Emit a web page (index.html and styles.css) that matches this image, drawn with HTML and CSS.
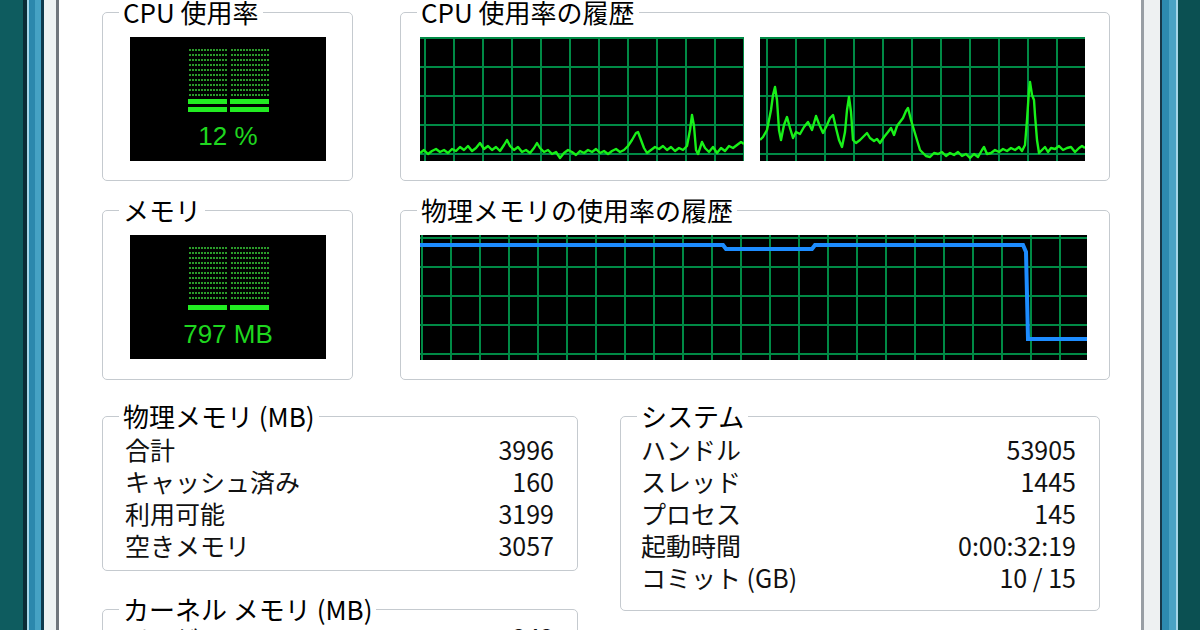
FILE: index.html
```html
<!DOCTYPE html>
<html lang="ja">
<head>
  <meta charset="UTF-8">
  <meta name="viewport" content="width=device-width, initial-scale=1.0">
  <title>Windows タスク マネージャ - パフォーマンス</title>
  <link rel="stylesheet" href="styles.css">
</head>
<body>

<div class="frame-left"></div>

<div class="window">
  <div class="perf-grid">
    <!-- CPU usage meter -->
    <fieldset class="box meter-box">
      <legend>CPU 使用率</legend>
      <div class="meter">
        <div class="meter-bars">
          <div class="meter-col">
            <div class="meter-dim"></div>
            <div class="meter-lit"></div>
            <div class="meter-lit"></div>
          </div>
          <div class="meter-col">
            <div class="meter-dim"></div>
            <div class="meter-lit"></div>
            <div class="meter-lit"></div>
          </div>
        </div>
        <div class="meter-value">12 %</div>
      </div>
    </fieldset>

    <!-- CPU history, one graph per core -->
    <fieldset class="box history-box">
      <legend>CPU 使用率の履歴</legend>
      <div class="graph-row">
        <div class="graph graph-core0">
          <svg viewBox="420 37 324 124" width="324" height="124">
            <polyline class="cpu-line" points="420,153 424,150 428,154 432,151 436,149 440,152 444,150 448,153 452,149 456,151 460,147 464,150 468,146 472,151 476,148 480,143 484,149 488,146 492,150 496,147 500,151 504,145 507,140 510,146 514,150 518,147 522,152 526,150 530,153 534,148 537,143 540,148 544,152 548,150 552,154 556,152 560,158 564,153 568,150 572,152 576,155 580,151 584,153 588,150 592,152 596,149 600,153 604,151 608,154 612,151 616,149 620,152 624,150 628,146 632,140 636,133 638,132 641,140 644,148 647,153 651,150 655,147 659,149 663,146 667,150 671,147 675,151 679,148 683,150 687,146 690,130 692,115 694,126 696,150 698,154 702,142 705,148 709,152 713,147 717,153 721,148 725,151 729,146 733,148 737,145 741,142 744,144"/>
          </svg>
        </div>
        <div class="graph graph-core1">
          <svg viewBox="760 37 325 124" width="325" height="124">
            <polyline class="cpu-line" points="760,140 763,137 767,130 771,110 773,95 775,87 777,100 779,130 781,140 784,125 787,117 790,128 793,138 796,132 800,134 804,127 808,122 812,130 816,116 819,124 823,133 827,125 830,118 833,115 836,128 839,140 842,147 845,132 847,110 849,97 851,112 853,140 856,143 860,140 864,136 867,133 870,138 874,141 877,139 880,143 884,137 888,132 891,128 894,135 897,126 900,122 903,118 906,111 908,108 911,120 914,130 917,140 920,150 923,153 926,156 930,157 934,153 938,154 942,152 946,156 950,153 954,155 958,152 962,156 966,154 970,158 974,154 978,157 982,150 984,147 987,154 991,153 995,150 999,152 1003,149 1007,151 1011,148 1015,150 1019,147 1022,151 1025,145 1027,120 1029,90 1030,82 1032,95 1034,100 1035,115 1037,140 1039,153 1042,150 1045,147 1048,152 1051,148 1055,149 1059,146 1063,150 1067,148 1071,147 1075,152 1079,148 1082,146 1085,148"/>
          </svg>
        </div>
      </div>
    </fieldset>

    <!-- Memory meter -->
    <fieldset class="box meter-box">
      <legend>メモリ</legend>
      <div class="meter">
        <div class="meter-bars">
          <div class="meter-col">
            <div class="meter-dim"></div>
            <div class="meter-lit"></div>
          </div>
          <div class="meter-col">
            <div class="meter-dim"></div>
            <div class="meter-lit"></div>
          </div>
        </div>
        <div class="meter-value">797 MB</div>
      </div>
    </fieldset>

    <!-- Physical memory history -->
    <fieldset class="box history-box">
      <legend>物理メモリの使用率の履歴</legend>
      <div class="graph-row">
        <div class="graph graph-mem">
          <svg viewBox="420 233 667 125" width="667" height="125">
            <polyline class="mem-line" points="420,243 723,243 726,247 812,247 815,243 1023,243 1026,250 1028,337 1087,337"/>
          </svg>
        </div>
      </div>
    </fieldset>
  </div>

  <div class="stats">
    <div class="stats-col">
      <fieldset class="box stat-box phys-box">
        <legend>物理メモリ (MB)</legend>
        <div class="stat-row"><span>合計</span><span>3996</span></div>
        <div class="stat-row"><span>キャッシュ済み</span><span>160</span></div>
        <div class="stat-row"><span>利用可能</span><span>3199</span></div>
        <div class="stat-row"><span>空きメモリ</span><span>3057</span></div>
      </fieldset>

      <fieldset class="box stat-box kernel-box">
        <legend>カーネル メモリ (MB)</legend>
        <div class="stat-row"><span>ページ</span><span>242</span></div>
      </fieldset>
    </div>

    <fieldset class="box stat-box system-box">
      <legend>システム</legend>
      <div class="stat-row"><span>ハンドル</span><span>53905</span></div>
      <div class="stat-row"><span>スレッド</span><span>1445</span></div>
      <div class="stat-row"><span>プロセス</span><span>145</span></div>
      <div class="stat-row"><span>起動時間</span><span>0:00:32:19</span></div>
      <div class="stat-row"><span>コミット (GB)</span><span>10 / 15</span></div>
    </fieldset>
  </div>
</div>

<div class="frame-right"></div>

</body>
</html>
```

FILE: styles.css
```css
body {
  margin: 0;
  width: 1200px;
  height: 630px;
  overflow: hidden;
  display: flex;
  background-color: #0d5a5d;
  font-family: "Noto Sans CJK JP", sans-serif;
  color: #111;
}
/* Aero window border, desktop showing at the sides */
.frame-left {
  width: 60px;
  flex-shrink: 0;
  background: linear-gradient(90deg,
    #0e5c5f 0 23px, #0b2b36 23px 27px, #a4d6e8 27px 29px,
    #2b88ad 29px 35px, #45a2c4 35px 41px, #0f3b4e 41px 44px,
    #eef2f3 44px 56px, #70767d 56px 59px, #fff 59px);
}
.frame-right {
  width: 59px;
  flex-shrink: 0;
  background: linear-gradient(90deg,
    #989ea4 0 3px, #eef1f2 3px 19px, #17384a 19px 21px,
    #2d8ab0 21px 28px, #4aa3c4 28px 35px, #a5d6e8 35px 37px,
    #0b5052 37px);
}
.window {
  flex: 1;
  background-color: #fff;
  padding-left: 42px;
  overflow: hidden;
}
.perf-grid {
  display: grid;
  grid-template-columns: 251px 710px;
  column-gap: 47px;
  row-gap: 17px;
}
/* Group boxes: horizontal spacing lives on the children so the legend stays put */
.box {
  margin: 0;
  padding: 0;
  min-width: 0;
  box-sizing: border-box;
  border: 1px solid #c5cacf;
  border-radius: 5px;
}
.box legend {
  margin-left: 16px;
  padding: 0 4px;
  font-size: 26px;
  line-height: 24px;
  color: #000;
}
.meter-box {
  padding-top: 13px;
  padding-bottom: 19px;
}
.history-box {
  padding-top: 13px;
  padding-bottom: 19px;
}
/* Green LED meter */
.meter {
  height: 124px;
  margin: 0 26px 0 27px;
  background-color: #000;
  display: flex;
  flex-direction: column;
  align-items: center;
  padding-top: 12px;
  box-sizing: border-box;
}
.meter-bars {
  display: flex;
  gap: 3px;
  height: 63px;
}
.meter-col {
  width: 39px;
  display: flex;
  flex-direction: column;
}
.meter-dim {
  flex: 1;
  background-color: #000;
  background-image:
    linear-gradient(90deg, #000 1px, transparent 1px),
    repeating-linear-gradient(180deg, #2a9a2a 0 2px, transparent 2px 5px);
  background-size: 3px 100%, auto;
}
.meter-lit {
  height: 5px;
  margin-top: 3px;
  background-color: #22ec22;
}
.meter-value {
  margin-top: 10px;
  font-family: "Liberation Sans", sans-serif;
  font-size: 26px;
  line-height: 28px;
  color: #1fd61f;
}
/* History graphs */
.graph-row {
  display: flex;
  gap: 16px;
  margin: 0 22px 0 19px;
}
.graph {
  height: 124px;
  background-color: #000;
  background-image:
    linear-gradient(90deg, #008a45 2px, transparent 2px),
    linear-gradient(180deg, #008a45 2px, transparent 2px);
  background-size: 29px 29px;
}
.graph svg {
  display: block;
}
.graph-core0 {
  width: 324px;
  background-position: 4px 0, 0 0;
}
.graph-core1 {
  width: 325px;
  background-position: 6px 0, 0 0;
}
.graph-mem {
  width: 667px;
  height: 125px;
  background-position: 1px 0, 0 2px;
}
.cpu-line {
  fill: none;
  stroke: #19f019;
  stroke-width: 2.4;
  stroke-linejoin: round;
}
.mem-line {
  fill: none;
  stroke: #1d8cff;
  stroke-width: 4;
}
/* Statistics */
.stats {
  display: flex;
  gap: 42px;
  margin-top: 24px;
  align-items: flex-start;
}
.stats-col {
  display: flex;
  flex-direction: column;
  gap: 26px;
}
.stat-box {
  font-size: 25px;
}
.phys-box {
  width: 476px;
  padding-top: 5px;
  padding-bottom: 9px;
}
.kernel-box {
  width: 476px;
  padding-bottom: 9px;
}
.system-box {
  width: 480px;
  padding-top: 5px;
  padding-bottom: 17px;
}
.stat-row {
  display: flex;
  justify-content: space-between;
  height: 32px;
  line-height: 32px;
  margin: 0 23px 0 22px;
  white-space: nowrap;
}
.system-box .stat-row {
  margin-left: 20px;
}
```
